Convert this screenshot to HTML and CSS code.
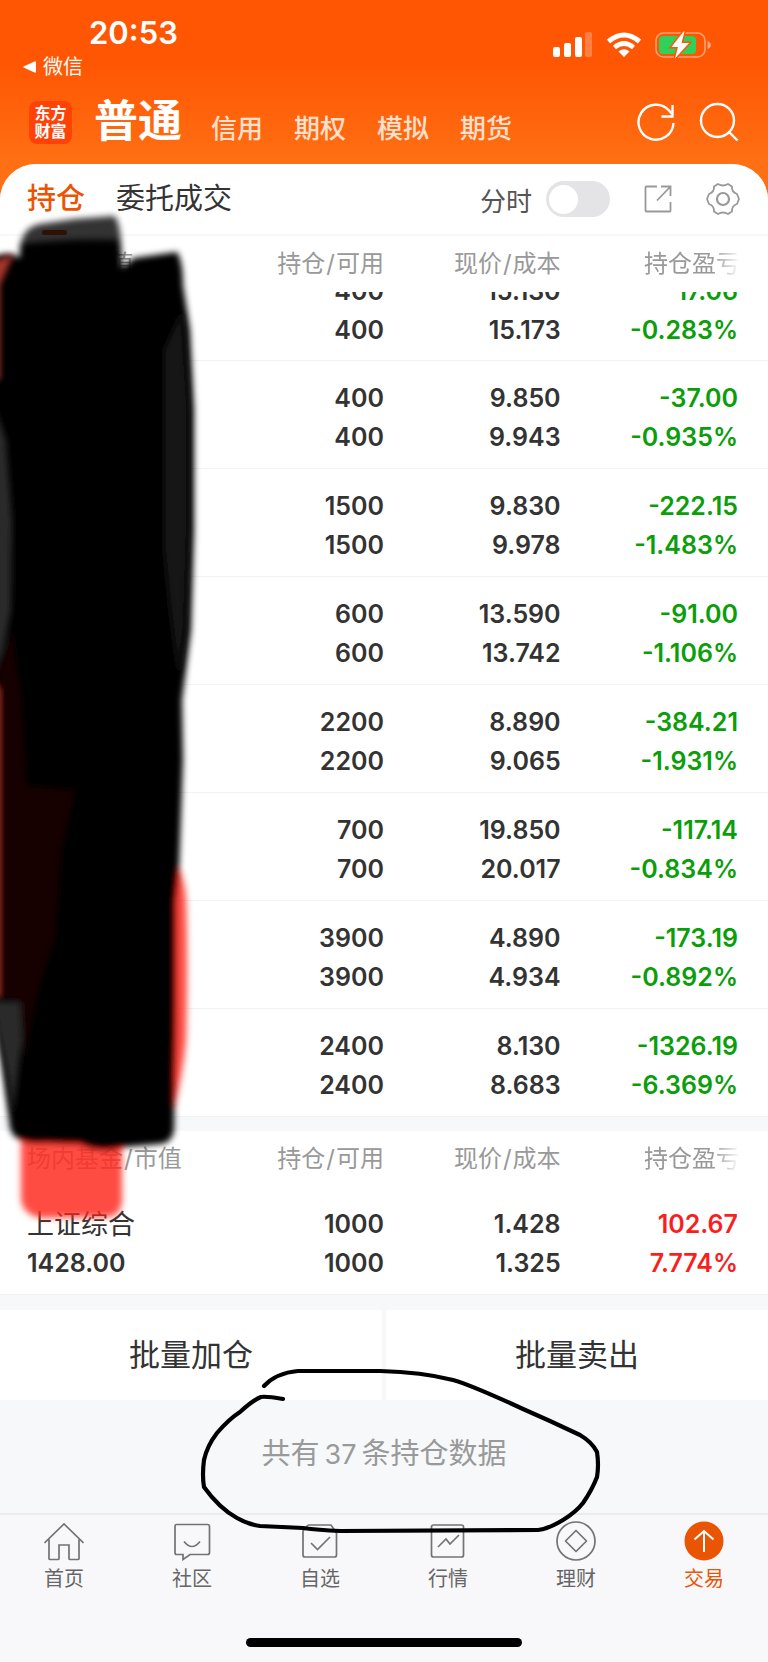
FILE: index.html
```html
<!DOCTYPE html>
<html lang="zh-CN">
<head>
<meta charset="utf-8">
<meta name="viewport" content="width=device-width, initial-scale=1">
<title>持仓</title>
<link rel="stylesheet" href="styles.css">
</head>
<body>
<div class="page">
  <header class="top">
    <div class="status">
      <div class="status-left">
        <time class="clock">20:53</time>
        <a class="back" href="#"><svg width="13" height="12" viewBox="0 0 13 12"><path d="M1 5.2 11.5.4Q13 0 13 1.5v9q0 1.5-1.5 1.1L1 6.8Q-.4 6 1 5.2Z" fill="#fff"/></svg>微信</a>
      </div>
      <div class="status-right">
        <svg width="40" height="26" viewBox="0 0 40 26" fill="#fff"><rect x="0" y="15" width="7" height="10" rx="2"/><rect x="11" y="11" width="7" height="14" rx="2"/><rect x="22" y="5" width="7" height="20" rx="2"/><rect x="32" y="0" width="7" height="25" rx="2" opacity=".25"/></svg>
        <svg width="36" height="26" viewBox="0 0 36 26" fill="none" stroke="#fff" stroke-width="5"><path d="M2.500 9.500Q18-3.500 33.500 9.500"/><path d="M8.500 15.500Q18 7.500 27.500 15.500" stroke-width="4.600"/><path d="M12.500 19.500Q18 15 23.500 19.500L18 25Z" fill="#fff" stroke="none"/></svg>
        <svg width="56" height="28" viewBox="0 0 56 28"><rect x="1" y="2" width="49" height="24" rx="7.500" fill="none" stroke="#fff" stroke-opacity=".45" stroke-width="1.600"/><path d="M52.500 10q3.500 1.500 3.500 4t-3.500 4Z" fill="#fff" fill-opacity=".45"/><rect x="4" y="5" width="37" height="18" rx="4" fill="#30d158"/><path d="M28.500.500 16.500 16H23l-3 11.500L34 12h-7.500l3-11.500Z" fill="#fff" stroke="#ff5804" stroke-width="3" paint-order="stroke"/></svg>
      </div>
    </div>
    <nav class="accounts">
      <div class="logo"><span>东方</span><span>财富</span></div>
      <a class="account current" href="#">普通</a>
      <a class="account" href="#">信用</a>
      <a class="account" href="#">期权</a>
      <a class="account" href="#">模拟</a>
      <a class="account" href="#">期货</a>
      <span class="grow"></span>
      <button class="icon-btn" aria-label="刷新"><svg width="40" height="40" viewBox="0 0 40 40" fill="none" stroke="#fff" stroke-width="2.400"><path d="M37.500 21A17.500 17.500 0 1 1 33 8.500L36 12"/><path d="M36.500 3v11.500H25.500"/></svg></button>
      <button class="icon-btn" aria-label="搜索"><svg width="40" height="40" viewBox="0 0 40 40" fill="none" stroke="#fff" stroke-width="2.400"><circle cx="18.500" cy="18.500" r="16.500"/><path d="m29.500 29.500 9 9"/></svg></button>
    </nav>
  </header>

  <main class="panel">
    <div class="toolbar">
      <a class="view active" href="#">持仓</a>
      <a class="view" href="#">委托成交</a>
      <span class="grow"></span>
      <label class="timeshare">分时<input class="switch" type="checkbox" role="switch"></label>
      <button class="icon-btn" aria-label="分享"><svg width="28" height="28" viewBox="0 0 28 28" fill="none" stroke="#999" stroke-width="1.800"><path d="M13 1.500H2.500Q1.500 1.500 1.500 2.500v23q0 1 1 1h23q1 0 1-1V17M13 15.500 26.500 1.500M17 1.500h9.500V11"/></svg></button>
      <button class="icon-btn" aria-label="设置"><svg width="34" height="34" viewBox="0 0 34 34" fill="none" stroke="#999" stroke-width="1.800"><circle cx="17" cy="17" r="6" stroke-width="2.200"/><path d="M12 2q5 3 10 0l4 2.500q-.5 5.500 5 7.500l2 5-2 5q-5.500 2-5 7.500L22 32q-5-3-10 0l-4-2.500Q8.500 24 3 22l-2-5 2-5q5.500-2 5-7.500Z" stroke-linejoin="round"/></svg></button>
    </div>

    <table class="holdings">
      <thead><tr><th>股票<i>/</i>市值</th><th>持仓<i>/</i>可用</th><th>现价<i>/</i>成本</th><th><span class="fade">持仓盈亏</span></th></tr></thead>
      <tbody>
        <tr class="scrolled"><td></td><td><div><span>400</span><span>400</span></div></td><td><div><span>15.130</span><span>15.173</span></div></td><td class="down"><div><span>-17.06</span><span>-0.283%</span></div></td></tr>
        <tr><td></td><td><span>400</span><span>400</span></td><td><span>9.850</span><span>9.943</span></td><td class="down"><span>-37.00</span><span>-0.935%</span></td></tr>
        <tr><td></td><td><span>1500</span><span>1500</span></td><td><span>9.830</span><span>9.978</span></td><td class="down"><span>-222.15</span><span>-1.483%</span></td></tr>
        <tr><td></td><td><span>600</span><span>600</span></td><td><span>13.590</span><span>13.742</span></td><td class="down"><span>-91.00</span><span>-1.106%</span></td></tr>
        <tr><td></td><td><span>2200</span><span>2200</span></td><td><span>8.890</span><span>9.065</span></td><td class="down"><span>-384.21</span><span>-1.931%</span></td></tr>
        <tr><td></td><td><span>700</span><span>700</span></td><td><span>19.850</span><span>20.017</span></td><td class="down"><span>-117.14</span><span>-0.834%</span></td></tr>
        <tr><td></td><td><span>3900</span><span>3900</span></td><td><span>4.890</span><span>4.934</span></td><td class="down"><span>-173.19</span><span>-0.892%</span></td></tr>
        <tr><td></td><td><span>2400</span><span>2400</span></td><td><span>8.130</span><span>8.683</span></td><td class="down"><span>-1326.19</span><span>-6.369%</span></td></tr>
      </tbody>
    </table>

    <table class="holdings funds">
      <thead><tr><th>场内基金<i>/</i>市值</th><th>持仓<i>/</i>可用</th><th>现价<i>/</i>成本</th><th><span class="fade">持仓盈亏</span></th></tr></thead>
      <tbody>
        <tr><td><span class="name">上证综合</span><span>1428.00</span></td><td><span>1000</span><span>1000</span></td><td><span>1.428</span><span>1.325</span></td><td class="up"><span>102.67</span><span>7.774%</span></td></tr>
      </tbody>
    </table>

    <div class="batch"><button>批量加仓</button><button>批量卖出</button></div>
    <p class="summary">共有<span>37</span>条持仓数据</p>
  </main>

  <footer class="bottom">
    <nav class="tabs">
      <a href="#"><svg viewBox="0 0 40 40"><path d="M.5 22 20 3l19.500 19M5 18.500V37.500q0 1 1 1h8q1 0 1-1V24h10v13.500q0 1 1 1h8q1 0 1-1v-19"/></svg>首页</a>
      <a href="#"><svg viewBox="0 0 40 40"><path d="M4.500 3.500h31q2 0 2 2v26q0 2-2 2H18l-7 5v-5H4.500q-1.500 0-1.500-2v-26q0-2 1.500-2ZM12 20.500q8 10 16 0"/></svg>社区</a>
      <a href="#"><svg viewBox="0 0 40 40"><path d="M8 4h23l5.500 8v22q0 2-2 2H5q-2 0-2-2V10l5-6M11 22l6.500 6.500L30 16"/></svg>自选</a>
      <a href="#"><svg viewBox="0 0 40 40"><path d="M5.500 4h28q2 0 2 2v28q0 2-2 2h-28q-2 0-2-2V6q0-2 2-2ZM10 26l8-8 4 5 9-9"/></svg>行情</a>
      <a href="#"><svg viewBox="0 0 40 40"><circle cx="20" cy="20" r="19"/><path d="m20 9.500 10.500 10.500L20 30.500 9.500 20Z" stroke-linejoin="round"/></svg>理财</a>
      <a class="active" href="#"><svg viewBox="0 0 40 40"><circle cx="20" cy="20" r="19.500" fill="#ea5504" stroke="none"/><path d="M20 31V10M10.500 18.500 20 10l9.500 8.500" stroke="#fff" stroke-width="2"/></svg>交易</a>
    </nav>
    <div class="home-bar"></div>
  </footer>

  <svg class="ink" viewBox="0 0 768 1662" aria-hidden="true">
    <defs>
      <filter id="soft" x="-20%" y="-5%" width="140%" height="110%"><feGaussianBlur stdDeviation="3"/></filter>
      <filter id="edge" x="-50%" y="-5%" width="200%" height="110%"><feGaussianBlur stdDeviation="3"/></filter>
    </defs>
    <g filter="url(#soft)">
      <path fill="#ff2c20" fill-opacity=".84" d="M21 1110H122V1203Q120 1214 110 1217L40 1218Q23 1214 21 1200ZM160 860h14q10 12 12 40 2 60 0 140-3 34-12 70H160Z"/>
      <path fill="#000" fill-opacity=".8" d="M20 262Q17 228 40 224L75 219 114 216Q121 220 122 262Z"/>
      <path fill="#000" d="M20 300V244Q70 238 119 240L122 268 134 258 177 252Q183 262 183 285L190 330 194 410 194 530 191 630 182 700 183 760 179 870 176 900 176 1010 174 1130Q172 1143 160 1144L125 1147Q100 1154 80 1144L45 1143Q14 1145 10 1128L1 1060-9 1000V258Q8 250 20 258Z"/>
    </g>
    <g filter="url(#edge)">
      <path fill="#171717" d="M182 310 188 400 188 530 185 625 179 680 170 610 164 550 164 350Z"/>
      <path fill="#2b2b2b" d="M-8 400 6 440 12 520 11 610 3 650-8 680Z"/>
      <path fill="#160504" d="M-8 690 12 630 22 700 27 785 76 790 62 850 55 940 40 985 24 1060 18 1000H-8Z"/>
      <path fill="#2a2a2a" d="M-8 1002H20L22 1040 13 1115 8 1080 0 1040Z"/>
      <path fill="#a5352c" d="M-8 262 14 254 0 285V380H-8ZM-8 680-1 690V996H-8Z"/>
    </g>
    <path fill="none" stroke="#000" stroke-width="4.200" stroke-linecap="round" stroke-linejoin="round" d="M264 1386Q276 1373 298 1371L380 1371Q422 1372 453 1380 471 1385 523 1409L550 1421 580 1435Q592 1442 597 1452 599 1465 597 1477 592 1490 583 1503 576 1512 563 1520 548 1529 538 1530L340 1531Q318 1530 303 1528L260 1526Q247 1524 237 1518 219 1508 204 1487 202 1475 204 1460 207 1446 217 1433 229 1419 240 1412 253 1400 261 1397 266 1396 283 1399"/>
  </svg>
</div>
</body>
</html>
```
FILE: styles.css
```css
* { box-sizing: border-box; }

body {
  margin: 0;
  background: #f8f8fb;
  font-family: Inter, "Noto Sans CJK SC", sans-serif;
  color: #333;
}

a { color: inherit; text-decoration: none; }

button {
  border: 0;
  padding: 0;
  background: none;
  font: inherit;
  color: inherit;
}

svg { display: block; flex: none; }

.page {
  position: relative;
  min-height: 100vh;
  overflow: hidden;
  display: flex;
  flex-direction: column;
  background: linear-gradient(#ff5603 0, #ff5603 64px, #ff7014 164px) no-repeat;
  background-size: 100% 240px;
}

.grow { flex: 1; }

/* Status bar */
.status {
  display: flex;
  justify-content: space-between;
  align-items: flex-start;
  height: 88px;
  padding: 14px 57px 0 23px;
  color: #fff;
}

.clock {
  display: block;
  padding-left: 66px;
  font-size: 31px;
  line-height: 38px;
  font-weight: 600;
}

.back {
  display: flex;
  align-items: center;
  gap: 7px;
  font-size: 20px;
  line-height: 30px;
}

.status-right {
  display: flex;
  align-items: center;
  gap: 13px;
  padding-top: 17px;
}

/* Account switcher */
.accounts {
  display: flex;
  align-items: center;
  height: 76px;
  padding: 0 29px;
  color: #fff;
}

.logo {
  display: flex;
  flex-direction: column;
  align-items: center;
  justify-content: center;
  width: 43px;
  height: 43px;
  margin: 0 22px 8px 0;
  border-radius: 8px;
  background: #ff4306;
  font-size: 16px;
  line-height: 18px;
  font-weight: 700;
}

.account {
  margin: 6px 31px 0 0;
  font-size: 26px;
  line-height: 40px;
  font-weight: 500;
  color: #ffe0cf;
}

.account.current {
  margin: -10px 29px 0 0;
  font-size: 44px;
  line-height: 60px;
  font-weight: 700;
  color: #fff;
}

.accounts .icon-btn { margin: 0 0 8px 23px; }

/* Panel */
.panel {
  background: #f6f8fa;
  border-radius: 36px 36px 0 0;
  overflow: hidden;
}

.toolbar {
  display: flex;
  align-items: center;
  height: 72px;
  padding: 0 28px 0 27px;
  background: #fff;
  border-bottom: 2px solid #f8f8f8;
}

.view {
  position: relative;
  margin-right: 31px;
  font-size: 29px;
  line-height: 40px;
}

.view.active { color: #ea5504; font-weight: 500; }

.view.active::after {
  content: "";
  position: absolute;
  left: 15px;
  bottom: -16px;
  width: 25px;
  height: 5px;
  border-radius: 2px;
  background: #ea5504;
}

.timeshare {
  display: flex;
  align-items: center;
  gap: 14px;
  font-size: 26px;
  color: #555;
}

.switch {
  appearance: none;
  display: flex;
  align-items: center;
  width: 64px;
  height: 36px;
  margin: 0;
  padding: 0 3px;
  border-radius: 18px;
  background: #e4e4e7;
}

.switch::before {
  content: "";
  width: 29px;
  height: 29px;
  border-radius: 50%;
  background: #fff;
}

.switch:checked { justify-content: flex-end; background: #ea5504; }

.toolbar .icon-btn { margin-left: 34px; }

/* Holdings tables */
.holdings {
  width: 100%;
  table-layout: fixed;
  border-collapse: separate;
  border-spacing: 0;
  background: #fff;
}

.holdings th {
  position: relative;
  z-index: 1;
  width: 23%;
  height: 56px;
  padding: 0;
  background: #fff;
  font-size: 24px;
  line-height: 36px;
  font-weight: 400;
  color: #999;
  text-align: right;
  white-space: nowrap;
}

.holdings th:first-child {
  width: 27%;
  padding-left: 27px;
  text-align: left;
}

.holdings th:last-child { width: 27%; padding-right: 28px; }

.holdings th i { margin: 0 1px; font-style: normal; }

.fade {
  -webkit-mask-image: linear-gradient(to right, #000 72%, transparent);
  mask-image: linear-gradient(to right, #000 72%, transparent);
}

.holdings td {
  padding: 18px 0 11px;
  border-bottom: 1px solid #f2f2f2;
  font-size: 25px;
  line-height: 39px;
  font-weight: 600;
  text-align: right;
  vertical-align: top;
}

.holdings td:first-child { padding-left: 27px; text-align: left; }
.holdings td:last-child { padding-right: 30px; }
.holdings td span { display: block; }
.holdings .scrolled td { padding: 0 0 10px; }
.holdings .scrolled td:last-child { padding-right: 30px; }
.scrolled div { margin-top: -20px; }
.holdings .name { font-size: 27px; font-weight: 400; }
.holdings .down { color: #0a9e0a; }
.holdings .up { color: #f91f1f; }

.funds { margin-top: 14px; }

/* Actions */
.batch {
  display: grid;
  grid-template-columns: 1fr 1fr;
  gap: 4px;
  margin-top: 15px;
}

.batch button {
  height: 90px;
  padding-bottom: 5px;
  background: #fff;
  font-size: 31px;
  color: #333;
}

.summary {
  margin: 0;
  padding: 32px 0 36px;
  text-align: center;
  font-size: 29px;
  line-height: 44px;
  color: #999;
}

.summary span { margin: 0 5px; font-size: 27px; }

/* Bottom navigation */
.bottom {
  flex: 1;
  display: flex;
  flex-direction: column;
  justify-content: space-between;
  padding-bottom: 15px;
  border-top: 2px solid #ebebee;
  background: #f8f8fb;
}

.tabs { display: grid; grid-template-columns: repeat(6, 1fr); }

.tabs a {
  display: flex;
  flex-direction: column;
  align-items: center;
  gap: 4px;
  padding-top: 6px;
  font-size: 20px;
  line-height: 28px;
  color: #666;
}

.tabs svg {
  width: 40px;
  height: 40px;
  fill: none;
  stroke: #737373;
  stroke-width: 1.7;
}

.tabs .active { color: #ea5504; }

.home-bar {
  width: 36%;
  height: 9px;
  margin: 0 auto;
  border-radius: 5px;
  background: #000;
}

/* Marker strokes drawn over the screen */
.ink {
  position: absolute;
  z-index: 2;
  top: 0;
  left: 0;
  width: 100%;
  pointer-events: none;
}
```
